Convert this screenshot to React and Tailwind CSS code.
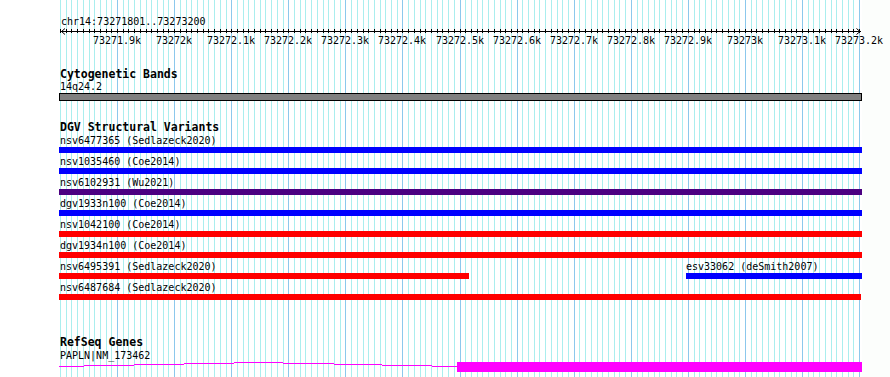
import React from "react";

const GRID = Array.from({ length: 141 }, (_, k) => ({
  k,
  x: Math.floor(60.5 + k * 5.7083),
}));

const LABELS = [
  "73271.9k",
  "73272k",
  "73272.1k",
  "73272.2k",
  "73272.3k",
  "73272.4k",
  "73272.5k",
  "73272.6k",
  "73272.7k",
  "73272.8k",
  "73272.9k",
  "73273k",
  "73273.1k",
  "73273.2k",
];

const ROWS = [
  [{ label: "nsv6477365 (Sedlazeck2020)", color: "#0000ff", x1: 59, x2: 862 }],
  [{ label: "nsv1035460 (Coe2014)", color: "#0000ff", x1: 59, x2: 862 }],
  [{ label: "nsv6102931 (Wu2021)", color: "#4b0082", x1: 59, x2: 862 }],
  [{ label: "dgv1933n100 (Coe2014)", color: "#0000ff", x1: 59, x2: 862 }],
  [{ label: "nsv1042100 (Coe2014)", color: "#ff0000", x1: 59, x2: 862 }],
  [{ label: "dgv1934n100 (Coe2014)", color: "#ff0000", x1: 59, x2: 862 }],
  [
    { label: "nsv6495391 (Sedlazeck2020)", color: "#ff0000", x1: 59, x2: 469 },
    { label: "esv33062 (deSmith2007)", color: "#0000ff", x1: 686, x2: 862, flush: true },
  ],
  [{ label: "nsv6487684 (Sedlazeck2020)", color: "#ff0000", x1: 59, x2: 861 }],
];

const INTRON = [
  [59, 84, 366],
  [84, 134, 365],
  [134, 184, 364],
  [184, 234, 363],
  [234, 283, 362],
  [283, 334, 363],
  [334, 382, 364],
  [382, 432, 365],
  [432, 457, 366],
];

function Grid() {
  return (
    <svg
      className="absolute left-0 top-0"
      width="890"
      height="377"
      shapeRendering="crispEdges"
    >
      <rect x="862" y="0" width="28" height="377" fill="#fcfefc" />
      {GRID.map(({ k, x }) => (
        <rect
          key={k}
          x={x}
          y="0"
          width="1"
          height="377"
          fill={k > 0 && k % 10 === 0 ? "#8cc8ec" : "#aaeeee"}
        />
      ))}
    </svg>
  );
}

function Ruler() {
  return (
    <svg width="890" height="20" className="block" shapeRendering="crispEdges">
      <rect x="61" y="4" width="800" height="1" fill="#000" />
      {GRID.map(({ k, x }) => (
        <rect key={k} x={x} y="2" width="1" height="4" fill="#000" />
      ))}
      <polyline points="65,1.5 61.5,4.5 65,7.5" fill="none" stroke="#000" strokeWidth="1" shapeRendering="auto" />
      <polyline points="856.5,1.5 860,4.5 856.5,7.5" fill="none" stroke="#000" strokeWidth="1" shapeRendering="auto" />
      {LABELS.map((l, i) => (
        <text
          key={l}
          x={GRID[(i + 1) * 10].x}
          y="17"
          textAnchor="middle"
          fontSize="10"
          fill="#000"
          fontFamily="'DejaVu Sans Mono', monospace"
        >
          {l}
        </text>
      ))}
    </svg>
  );
}

function Title({ children, className = "" }) {
  return (
    <div className={`pl-[60px] h-[13px] text-[11.5px] leading-[13px] font-bold whitespace-nowrap ${className}`}>
      {children}
    </div>
  );
}

function Label({ children, className = "" }) {
  return (
    <div className={`h-[11px] text-[10px] leading-[11px] whitespace-nowrap ${className}`}>
      {children}
    </div>
  );
}

function Row({ features }) {
  return (
    <div className="relative h-[21px]">
      {features.map((f) => (
        <div
          key={f.label}
          className="absolute top-0 flex flex-col"
          style={{ left: f.x1, width: f.x2 - f.x1 }}
        >
          <Label className={f.flush ? "" : "pl-px"}>{f.label}</Label>
          <div className="mt-px h-[6px]" style={{ backgroundColor: f.color }} />
        </div>
      ))}
    </div>
  );
}

function Gene() {
  return (
    <svg width="890" height="12" className="block" shapeRendering="crispEdges">
      {INTRON.map(([a, b, y]) => (
        <rect key={a} x={a} y={y - 361} width={b - a} height="1" fill="#ff00ff" />
      ))}
      <rect x="457" y="1" width="405" height="10" fill="#ff00ff" />
    </svg>
  );
}

export default function App() {
  return (
    <div className="relative w-[890px] h-[377px] overflow-hidden bg-white text-black font-['DejaVu_Sans_Mono',monospace]">
      <Grid />
      <div className="relative flex flex-col">
        <Label className="mt-[16px] pl-[61px]">chr14:73271801..73273200</Label>
        <Ruler />

        <Title className="mt-[21px]">Cytogenetic Bands</Title>
        <Label className="pl-[60px]">14q24.2</Label>
        <div className="mt-px ml-[59px] w-[803px] h-[8px] border border-black bg-[#808080]" />

        <Title className="mt-[20px]">DGV Structural Variants</Title>
        <div className="mt-px flex flex-col">
          {ROWS.map((r, i) => (
            <Row key={i} features={r} />
          ))}
        </div>

        <Title className="mt-[33px]">RefSeq Genes</Title>
        <Label className="mt-px pl-[60px]">PAPLN|NM_173462</Label>
        <Gene />
      </div>
    </div>
  );
}
